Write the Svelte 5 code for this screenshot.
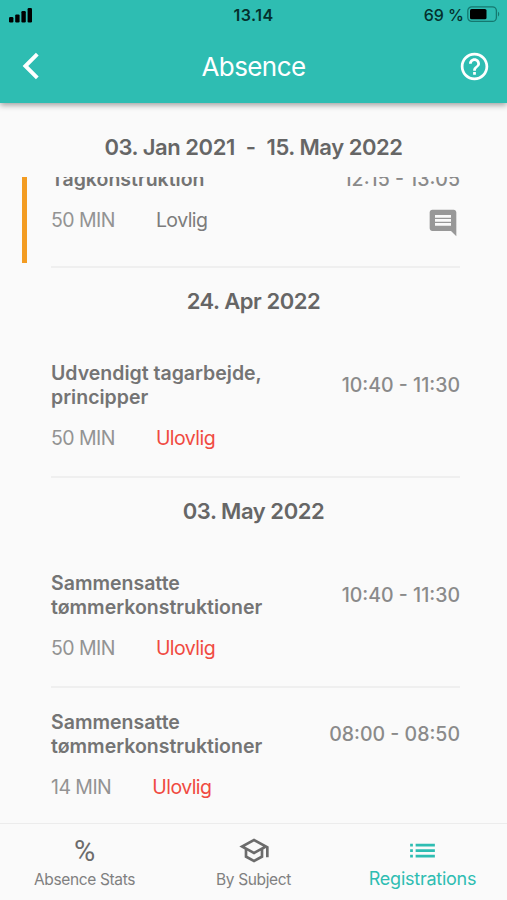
<script>
  const range = { from: '03. Jan 2021', to: '15. May 2022' };

  const groups = [
    {
      date: null,
      items: [
        { title: 'Tagkonstruktion', time: '12:15 - 13:05', minutes: 50, status: 'Lovlig', pending: true, comment: true }
      ]
    },
    {
      date: '24. Apr 2022',
      items: [
        { title: 'Udvendigt tagarbejde, principper', time: '10:40 - 11:30', minutes: 50, status: 'Ulovlig' }
      ]
    },
    {
      date: '03. May 2022',
      items: [
        { title: 'Sammensatte tømmerkonstruktioner', time: '10:40 - 11:30', minutes: 50, status: 'Ulovlig' },
        { title: 'Sammensatte tømmerkonstruktioner', time: '08:00 - 08:50', minutes: 14, status: 'Ulovlig' }
      ]
    }
  ];

  let tab = $state('registrations');
</script>

<div class="screen">
  <header>
    <div class="status">
      <svg class="signal" width="24" height="16" viewBox="0 0 24 16">
        <rect x="0" y="10" width="4.4" height="5.5" rx="1.2" />
        <rect x="6.2" y="7.4" width="4.4" height="8.1" rx="1.2" />
        <rect x="12.4" y="4" width="4.4" height="11.5" rx="1.2" />
        <rect x="18.6" y="1" width="4.4" height="14.5" rx="1.2" />
      </svg>
      <span class="clock">13.14</span>
      <span class="battery">
        <span class="percent">69 %</span>
        <svg width="33" height="17" viewBox="0 0 33 17">
          <rect x="0.8" y="0.8" width="28.6" height="14.6" rx="4" fill="none" stroke="#15786f" stroke-width="1.3" />
          <rect x="3" y="3" width="16.5" height="10.3" rx="1.6" />
          <path d="M31 5.8c1.6.6 1.6 4 0 4.6z" fill="#15786f" />
        </svg>
      </span>
    </div>
    <div class="bar">
      <button class="back" aria-label="Back">
        <svg width="18" height="28" viewBox="0 0 18 28">
          <path d="M15.3 2.2 3.4 14l11.9 11.8" fill="none" stroke="#fff" stroke-width="3.9" />
        </svg>
      </button>
      <h1>Absence</h1>
      <button class="help" aria-label="Help">
        <svg width="33" height="33" viewBox="0 0 24 24" fill="#fff">
          <path d="M11 18h2v-2h-2v2zm1-16C6.48 2 2 6.48 2 12s4.48 10 10 10 10-4.48 10-10S17.52 2 12 2zm0 18c-4.41 0-8-3.59-8-8s3.59-8 8-8 8 3.59 8 8-3.59 8-8 8zm0-14c-2.21 0-4 1.79-4 4h2c0-1.1.9-2 2-2s2 .9 2 2c0 2-3 1.75-3 5h2c0-2.25 3-2.5 3-5 0-2.21-1.79-4-4-4z" />
        </svg>
      </button>
    </div>
  </header>

  <div class="range">
    <span>{range.from}</span><span class="dash">-</span><span>{range.to}</span>
  </div>

  <!-- the list is scrolled a little, so the first row is cut off -->
  <main>
    {#each groups as group}
      {#if group.date}
        <h2>{group.date}</h2>
      {/if}
      {#each group.items as item}
        <div class="row" class:pending={item.pending}>
          <div class="top">
            <p class="title">{item.title}</p>
            <span class="time">{item.time}</span>
          </div>
          <div class="meta">
            <span class="minutes">{item.minutes} MIN</span>
            <span class="kind" class:illegal={item.status === 'Ulovlig'}>{item.status}</span>
            {#if item.comment}
              <svg class="comment" width="32" height="32" viewBox="0 0 24 24" fill="#989898">
                <path d="M21.99 4c0-1.1-.89-2-1.99-2H4c-1.1 0-2 .9-2 2v12c0 1.1.9 2 2 2h14l4 4-.01-18zM18 14H6v-2h12v2zm0-3H6V9h12v2zm0-3H6V6h12v2z" />
              </svg>
            {/if}
          </div>
        </div>
      {/each}
    {/each}
  </main>

  <nav>
    <button class:active={tab === 'stats'} onclick={() => (tab = 'stats')}>
      <span class="icon sign">%</span>
      <span class="label">Absence Stats</span>
    </button>
    <button class:active={tab === 'subject'} onclick={() => (tab = 'subject')}>
      <svg class="icon" width="32" height="32" viewBox="0 0 24 24" fill="currentColor">
        <path d="M12 3 1 9l4 2.18v6L12 21l7-3.82v-6l2-1.09V17h2V9L12 3zm6.82 6L12 12.72 5.18 9 12 5.28 18.82 9zM17 15.99l-5 2.73-5-2.73v-3.72L12 15l5-2.73v3.72z" />
      </svg>
      <span class="label">By Subject</span>
    </button>
    <button class:active={tab === 'registrations'} onclick={() => (tab = 'registrations')}>
      <svg class="icon" width="33" height="33" viewBox="0 0 24 24" fill="currentColor">
        <path d="M3 13h2v-2H3v2zm0 4h2v-2H3v2zm0-8h2V7H3v2zm4 4h14v-2H7v2zm0 4h14v-2H7v2zM7 7v2h14V7H7z" />
      </svg>
      <span class="label">Registrations</span>
    </button>
  </nav>
</div>

<style>
  :global(body) {
    margin: 0;
    background: #fafafa;
  }
  .screen {
    display: flex;
    flex-direction: column;
    width: 507px;
    height: 900px;
    overflow: hidden;
    background: #fafafa;
    color: #6e6e6e;
    font-family: Inter, 'Liberation Sans', sans-serif;
  }
  h1, h2, p {
    margin: 0;
  }
  button {
    padding: 0;
    border: 0;
    background: none;
    font: inherit;
    color: inherit;
  }
  svg {
    display: block;
  }

  header {
    flex: none;
    height: 103px;
    background: #2ebdb2;
    box-shadow: 0 2px 6px rgba(0, 0, 0, 0.38);
  }
  .status {
    display: grid;
    grid-template-columns: 1fr auto 1fr;
    align-items: center;
    height: 29px;
    padding: 0 7px 0 9px;
    color: #04302d;
  }
  .clock {
    margin-left: -2px;
    font-size: 16px;
    font-weight: 600;
    letter-spacing: 0.5px;
  }
  .battery {
    display: flex;
    align-items: center;
    justify-content: flex-end;
    gap: 3px;
  }
  .percent {
    font-size: 16px;
    font-weight: 500;
  }
  .bar {
    display: grid;
    grid-template-columns: 60px 1fr 60px;
    align-items: center;
    height: 74px;
  }
  .back {
    padding-left: 22px;
  }
  .help {
    padding-left: 11px;
  }
  h1 {
    text-align: center;
    color: #fff;
    font-size: 26px;
    font-weight: 400;
    letter-spacing: -0.6px;
  }

  .range {
    display: flex;
    flex: none;
    align-items: center;
    justify-content: center;
    height: 60px;
    padding-top: 14px;
    font-size: 22px;
    font-weight: 600;
    letter-spacing: -0.45px;
    color: #666;
  }
  .dash {
    padding: 0 11px;
  }

  main {
    flex: 1;
    min-height: 0;
    overflow: hidden;
  }
  h2 {
    height: 71px;
    line-height: 66px;
    text-align: center;
    font-size: 22px;
    font-weight: 600;
    letter-spacing: -0.45px;
    color: #666;
  }
  .row {
    box-sizing: border-box;
    margin: 0 47px 0 51px;
    padding: 22px 0 25px;
    border-bottom: 2px solid #efefef;
  }
  .row.pending {
    position: relative;
    margin-top: -32px;
    padding-bottom: 27px;
  }
  .pending::before {
    content: '';
    position: absolute;
    left: -29px;
    top: 6px;
    bottom: 3px;
    width: 5px;
    background: #f39c22;
  }
  .top {
    display: flex;
    align-items: center;
    justify-content: space-between;
  }
  .title {
    width: 230px;
    font-size: 19.5px;
    font-weight: 600;
    line-height: 24.5px;
    color: #747474;
  }
  .time {
    font-size: 19.5px;
    font-weight: 500;
    color: #8a8a8a;
  }
  .meta {
    display: flex;
    align-items: flex-start;
    margin-top: 16px;
    font-size: 19.5px;
    line-height: 25px;
    letter-spacing: -0.55px;
  }
  .minutes {
    margin-right: 41px;
    color: #939393;
  }
  .kind {
    color: #7c7c7c;
  }
  .kind.illegal {
    color: #f04a41;
  }
  .comment {
    margin: -1px 1px 0 auto;
  }

  nav {
    display: grid;
    grid-template-columns: repeat(3, 1fr);
    flex: none;
    height: 76px;
    border-top: 1px solid #ececec;
  }
  nav button {
    display: flex;
    flex-direction: column;
    align-items: center;
    padding-top: 10px;
    color: #6c6c6c;
  }
  .icon {
    height: 33px;
  }
  .sign {
    font-family: Roboto, sans-serif;
    font-size: 29px;
    line-height: 35px;
  }
  .label {
    margin-top: 2px;
    font-size: 15.5px;
    line-height: 22px;
    letter-spacing: -0.35px;
    color: #808080;
  }
  nav .active, .active .label {
    color: #2ebdb2;
  }
  .active .label {
    margin-top: 1px;
    font-size: 18px;
    letter-spacing: -0.25px;
  }
</style>
